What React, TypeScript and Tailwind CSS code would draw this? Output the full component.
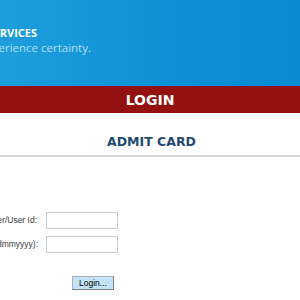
import React from "react";

export default function App() {
  return (
    <div className="w-[300px] h-[300px] overflow-hidden bg-white" style={{ fontFamily: '"DejaVu Sans", Verdana, sans-serif' }}>
      <div className="h-[86px] bg-gradient-to-r from-[#1e9edd] via-[#0f92d6] to-[#0a8bd2] pt-[27px]" style={{ fontFamily: '"Open Sans", "Noto Sans", sans-serif' }}>
        <div className="w-[37px] flex justify-end">
          <span className="whitespace-nowrap text-white font-bold text-[11px] leading-[12px]">SERVICES</span>
        </div>
        <div className="w-[91px] flex justify-end mt-[1px]">
          <span className="whitespace-nowrap text-[#b4dff5] text-[11.5px] leading-[16px]">Experience certainty.</span>
        </div>
      </div>
      <div className="h-[27px] bg-[#931111] flex items-center justify-center">
        <span className="text-white font-bold text-[14px] leading-[16px]">LOGIN</span>
      </div>
      <div className="pt-[16px] text-center">
        <span className="text-[#1f4a72] font-bold text-[12.5px] leading-[16px] pl-[3px]">ADMIT CARD</span>
      </div>
      <div className="h-[2px] bg-[#d5d9dd] mt-[2px]" />
      <div className="pt-[55px] flex flex-col gap-[7px]" style={{ fontFamily: '"Liberation Sans", Arial, sans-serif' }}>
        <div className="flex items-center">
          <div className="w-[37px] flex justify-end">
            <span className="whitespace-nowrap text-[8.5px] text-[#3a3a3a]">Roll Number/User Id:</span>
          </div>
          <input className="ml-[9px] w-[72px] h-[17px] border border-[#c7d0da] outline-none" />
        </div>
        <div className="flex items-center">
          <div className="w-[38px] flex justify-end">
            <span className="whitespace-nowrap text-[8.5px] text-[#3a3a3a]">Date of Birth (ddmmyyyy):</span>
          </div>
          <input className="ml-[8px] w-[72px] h-[17px] border border-[#c7d0da] outline-none" />
        </div>
      </div>
      <div className="pl-[72px] pt-[16px]">
        <button className="w-[42px] h-[14px] bg-[#c3e4f6] border border-[#a8b0b8] border-r-[#7d8388] border-b-[#7d8388] text-[8.5px] leading-[12px] text-black" style={{ fontFamily: '"Liberation Sans", Arial, sans-serif' }}>Login...</button>
      </div>
      <div className="h-[2px] bg-[#d5d9dd] mt-[14px]" />
    </div>
  );
}
